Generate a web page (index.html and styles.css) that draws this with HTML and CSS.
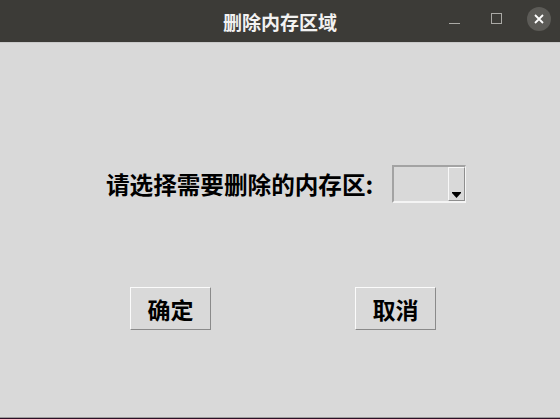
FILE: index.html
```html
<!DOCTYPE html>
<html lang="zh-CN">
<head>
    <meta charset="UTF-8">
    <title>删除内存区域</title>
    <link rel="stylesheet" href="styles.css">
</head>
<body>
    <div class="window">
        <header class="titlebar">
            <span></span>
            <span class="title">删除内存区域</span>
            <div class="controls">
                <span class="ctl-min"></span>
                <span class="ctl-max"></span>
                <span class="ctl-close">
                    <svg width="10" height="10" viewBox="0 0 10 10"><path d="M1 1L9 9M9 1L1 9" stroke="#fff" stroke-width="1.8"/></svg>
                </span>
            </div>
        </header>

        <main class="content">
            <div class="pick-row">
                <label class="pick-label">请选择需要删除的内存区:</label>
                <div class="combo">
                    <div class="combo-field"></div>
                    <div class="combo-arrow">
                        <svg width="9" height="6" viewBox="0 0 9 6"><path d="M0 0H9V1L4.5 6L0 1Z" fill="#000"/></svg>
                    </div>
                </div>
            </div>

            <div class="btn-row">
                <button class="btn">确定</button>
                <button class="btn">取消</button>
            </div>
        </main>
        <div class="bottom-edge"></div>
    </div>
</body>
</html>
```

FILE: styles.css
```css
* {
    margin: 0;
    padding: 0;
    box-sizing: border-box;
}

body {
    width: 560px;
    height: 419px;
    overflow: hidden;
    font-family: "Noto Sans CJK SC", "Noto Sans", sans-serif;
    background: #d9d9d9;
}

.window {
    height: 419px;
    display: flex;
    flex-direction: column;
}

.titlebar {
    height: 43px;
    background: #3c3b37;
    border-bottom: 1px solid #c9c9c9;
    display: grid;
    grid-template-columns: 1fr auto 1fr;
    align-items: center;
}

.title {
    color: #f2f2f2;
    font-size: 19px;
    font-weight: 700;
    padding-top: 1px;
}

.controls {
    justify-self: end;
    display: flex;
    align-items: center;
    padding-right: 9px;
}

.ctl-min {
    width: 11px;
    height: 1px;
    background: #aaa9a5;
    margin-top: 5px;
}

.ctl-max {
    width: 11px;
    height: 11px;
    border: 1px solid #aaa9a5;
    margin-left: 31px;
    margin-top: -5px;
}

.ctl-close {
    width: 24px;
    height: 24px;
    border-radius: 50%;
    background: #5c5b57;
    margin-left: 25px;
    margin-top: -4px;
    display: flex;
    align-items: center;
    justify-content: center;
}

.content {
    flex: 1;
    padding-top: 122px;
}

.pick-row {
    display: flex;
    align-items: center;
    padding-left: 106px;
    gap: 19px;
}

.pick-label {
    font-size: 23.6px;
    font-weight: 700;
    color: #000;
}

.combo {
    width: 74px;
    height: 38px;
    display: flex;
    border-top: 2px solid #a3a3a3;
    border-left: 2px solid #a3a3a3;
    border-bottom: 2px solid #f4f4f4;
    border-right: 1px solid #f4f4f4;
}

.combo-field {
    flex: 1;
}

.combo-arrow {
    width: 17px;
    border-left: 1px solid #f8f8f8;
    border-top: 1px solid #f8f8f8;
    border-right: 1px solid #8e8e8e;
    border-bottom: 1px solid #8e8e8e;
    display: flex;
    align-items: flex-end;
    justify-content: center;
    padding-bottom: 2px;
}

.btn-row {
    display: flex;
    padding-left: 130px;
    gap: 144px;
    margin-top: 84px;
}

.btn {
    width: 81px;
    height: 43px;
    background: #d9d9d9;
    border-top: 1px solid #fbfbfb;
    border-left: 1px solid #fbfbfb;
    border-bottom: 1px solid #8a8a8a;
    border-right: 1px solid #8a8a8a;
    font-family: "Noto Sans CJK SC", "Noto Sans", sans-serif;
    font-size: 23px;
    font-weight: 700;
    color: #000;
}

.bottom-edge {
    height: 2px;
    border-top: 1px solid #9d9d9d;
    background: #2c0f26;
}
```
